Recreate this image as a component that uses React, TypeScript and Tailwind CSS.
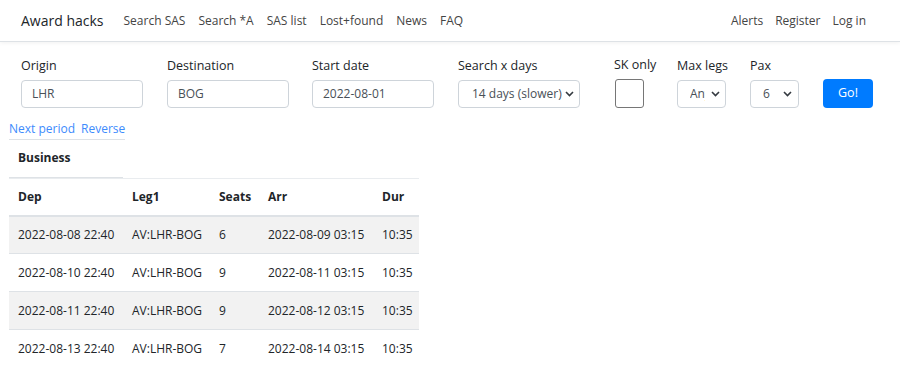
import React from 'react';

const rows = [
  { dep: '2022-08-08 22:40', leg: 'AV:LHR-BOG', seats: '6', arr: '2022-08-09 03:15', dur: '10:35' },
  { dep: '2022-08-10 22:40', leg: 'AV:LHR-BOG', seats: '9', arr: '2022-08-11 03:15', dur: '10:35' },
  { dep: '2022-08-11 22:40', leg: 'AV:LHR-BOG', seats: '9', arr: '2022-08-12 03:15', dur: '10:35' },
  { dep: '2022-08-13 22:40', leg: 'AV:LHR-BOG', seats: '7', arr: '2022-08-14 03:15', dur: '10:35' },
];

function Chevron() {
  return (
    <svg width="9" height="6" viewBox="0 0 9 6" className="shrink-0">
      <path d="M1 1l3.5 3.5L8 1" fill="none" stroke="#343a40" strokeWidth="1.6" />
    </svg>
  );
}

function Field({ label, children }: { label: string; children: React.ReactNode }) {
  return (
    <div className="flex flex-col">
      <label className="h-[18px] leading-[20px] text-[12.5px] text-[#212529] whitespace-nowrap">{label}</label>
      <div className="mt-[6px]">{children}</div>
    </div>
  );
}

const inputCls = 'w-[122px] h-[28px] border border-[#ced4da] rounded-[4px] flex items-center px-[10px] text-[#495057] whitespace-nowrap';

export default function App() {
  return (
    <div className="w-[900px] h-[370px] overflow-hidden bg-white text-[12px] text-[#212529]" style={{ fontFamily: '"Open Sans", sans-serif' }}>
      {/* navbar */}
      <nav className="h-[42px] flex items-center pl-[21px] pr-[34px] border-b border-[#dee2e6] shadow-[0_1px_4px_rgba(0,0,0,0.06)]">
        <span className="text-[14px] text-[#212529] mr-[20px] whitespace-nowrap">Award hacks</span>
        <div className="flex gap-[13px] text-[12px] text-[#444] whitespace-nowrap">
          <span>Search SAS</span>
          <span>Search *A</span>
          <span>SAS list</span>
          <span>Lost+found</span>
          <span>News</span>
          <span>FAQ</span>
        </div>
        <div className="ml-auto flex gap-[12px] text-[12px] text-[#444] whitespace-nowrap">
          <span>Alerts</span>
          <span>Register</span>
          <span>Log in</span>
        </div>
      </nav>

      {/* search form */}
      <div className="flex items-end pl-[21px] pt-[13px]">
        <div className="w-[146px]">
          <Field label="Origin">
            <div className={inputCls}>LHR</div>
          </Field>
        </div>
        <div className="w-[145px]">
          <Field label="Destination">
            <div className={inputCls}>BOG</div>
          </Field>
        </div>
        <div className="w-[146px]">
          <Field label="Start date">
            <div className={inputCls}>2022-08-01</div>
          </Field>
        </div>
        <div className="w-[156px]">
          <Field label="Search x days">
            <div className="w-[122px] h-[28px] border border-[#ced4da] rounded-[4px] flex items-center justify-between pl-[13px] pr-[5px] text-[#495057] whitespace-nowrap overflow-hidden">
              <span>14 days (slower)</span>
              <Chevron />
            </div>
          </Field>
        </div>
        <div className="w-[63px]">
          <Field label="SK only">
            <div className="ml-[1px] w-[29px] h-[29px] border border-[#767676] rounded-[3px]" />
          </Field>
        </div>
        <div className="w-[73px]">
          <Field label="Max legs">
            <div className="w-[49px] h-[28px] border border-[#ced4da] rounded-[4px] flex items-center justify-between pl-[12px] pr-[5px] text-[#495057]">
              <span className="w-[15px] overflow-hidden whitespace-nowrap">Any</span>
              <Chevron />
            </div>
          </Field>
        </div>
        <div className="w-[73px]">
          <Field label="Pax">
            <div className="w-[49px] h-[28px] border border-[#ced4da] rounded-[4px] flex items-center justify-between pl-[12px] pr-[6px] text-[#495057]">
              <span>6</span>
              <Chevron />
            </div>
          </Field>
        </div>
        <button className="w-[50px] h-[29px] rounded-[4px] bg-[#007bff] text-white text-[12.5px]">Go!</button>
      </div>

      {/* links */}
      <div className="ml-[9px] mt-[12px] w-[116px] h-[20px] leading-[18px] border-b border-[#dee2e6] flex gap-[6px] text-[#3d8bfd] whitespace-nowrap">
        <span>Next period</span>
        <span>Reverse</span>
      </div>

      {/* tab */}
      <div className="ml-[9px] w-[114px] h-[38px] border-b border-[#dee2e6] pl-[9px] pt-[9px] leading-[18px] font-bold text-[12px]">Business</div>

      {/* table */}
      <table className="ml-[9px] w-[410px] table-fixed border-collapse text-[12px]">
        <colgroup>
          <col className="w-[114px]" />
          <col className="w-[87px]" />
          <col className="w-[49px]" />
          <col className="w-[114px]" />
          <col />
        </colgroup>
        <thead>
          <tr className="h-[37px] border-t border-[#e9ecef] border-b-2 border-b-[#dee2e6]">
            <th className="text-left font-bold pl-[9px]">Dep</th>
            <th className="text-left font-bold pl-[9px]">Leg1</th>
            <th className="text-left font-bold pl-[9px]">Seats</th>
            <th className="text-left font-bold pl-[9px]">Arr</th>
            <th className="text-left font-bold pl-[9px]">Dur</th>
          </tr>
        </thead>
        <tbody>
          {rows.map((r, i) => (
            <tr key={i} className={`h-[38px] border-t border-[#dee2e6] ${i % 2 === 0 ? 'bg-[#f2f2f2]' : ''}`}>
              <td className="pl-[9px] whitespace-nowrap">{r.dep}</td>
              <td className="pl-[9px] whitespace-nowrap">{r.leg}</td>
              <td className="pl-[9px]">{r.seats}</td>
              <td className="pl-[9px] whitespace-nowrap">{r.arr}</td>
              <td className="pl-[9px]">{r.dur}</td>
            </tr>
          ))}
        </tbody>
      </table>
    </div>
  );
}
